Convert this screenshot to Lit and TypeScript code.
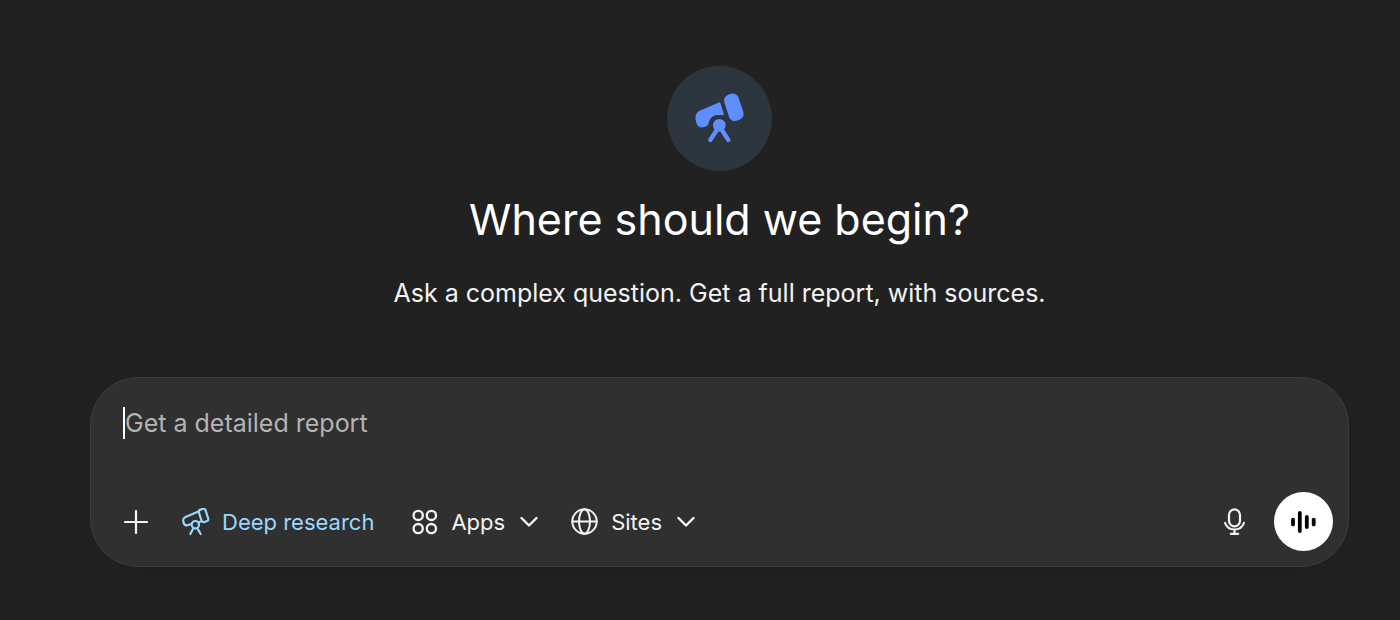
import { LitElement, html, css, svg } from "lit";
import { customElement, state } from "lit/decorators.js";

const chevron = html`<svg class="chevron" width="20" height="12" viewBox="-2 0 20 12" aria-hidden="true">
  <path d="M1.5 2 9 9.5 16.5 2" />
</svg>`;

const bars = [
  { x: 2, half: 2.4 },
  { x: 8.8, half: 9 },
  { x: 15.8, half: 5 },
  { x: 22.7, half: 2.4 },
];

@customElement("app-root")
export class AppRoot extends LitElement {
  static styles = css`
    :host {
      display: block;
      min-height: 100vh;
      box-sizing: border-box;
      padding: 66px 51px 52px 90px;
      background: #212121;
      color: #fff;
      font-family: Inter, "Liberation Sans", sans-serif;
    }
    svg {
      display: block;
      flex: none;
      fill: none;
      stroke: currentColor;
      stroke-linecap: round;
      stroke-linejoin: round;
    }
    .hero {
      display: flex;
      flex-direction: column;
      align-items: center;
      text-align: center;
    }
    .badge {
      display: grid;
      place-items: center;
      width: 105px;
      height: 105px;
      border-radius: 50%;
      background: #2d353e;
      color: #5f8fff;
    }
    h1 {
      margin: 20px 0 0;
      font-size: 43px;
      line-height: 56px;
      font-weight: 400;
    }
    .lead {
      margin: 28px 0 0;
      font-size: 25px;
      line-height: 36px;
      color: #f3f3f3;
    }
    .composer {
      display: flex;
      flex-direction: column;
      justify-content: space-between;
      gap: 52px;
      box-sizing: border-box;
      margin-top: 66px;
      padding: 28px 15px 15px 32px;
      border: 1px solid #3d3d3d;
      border-radius: 48px;
      background: #303030;
      box-shadow: 0 8px 36px rgba(0, 0, 0, 0.06);
    }
    .prompt {
      display: flex;
      align-items: center;
    }
    .caret {
      width: 2px;
      height: 32px;
      background: #fff;
    }
    input {
      flex: 1;
      min-width: 0;
      height: 34px;
      padding: 0;
      border: 0;
      outline: 0;
      background: none;
      color: #fff;
      font: inherit;
      font-size: 25px;
      caret-color: transparent;
    }
    input::placeholder {
      color: #b4b4b4;
      opacity: 1;
    }
    .toolbar {
      display: flex;
      align-items: center;
    }
    button {
      display: flex;
      align-items: center;
      padding: 0;
      border: 0;
      background: none;
      color: #f3f3f3;
      font: inherit;
      font-size: 22px;
      line-height: 32px;
      cursor: pointer;
    }
    .tools {
      display: flex;
      align-items: center;
      gap: 33px;
      flex: 1;
    }
    .research {
      gap: 12px;
      padding-right: 5px;
      color: #99d8ff;
    }
    .menu {
      gap: 13px;
    }
    .chevron {
      stroke-width: 2.4;
    }
    .voice {
      justify-content: center;
      width: 59px;
      height: 59px;
      margin-left: 28px;
      border-radius: 50%;
      background: #fff;
      color: #000;
    }
  `;

  @state() private value = "";

  render() {
    return html`
      <header class="hero">
        <div class="badge">
          <svg width="60" height="60" viewBox="88 86 180 180" aria-hidden="true">
            <g fill="currentColor" stroke="none">
              <path d="M173 127Q178 124 180 130L189 160Q190 166 184 165Q151 158 144 188Q143 195 137 198L131 200Q114 204 108 190L105 180Q101 162 115 152Z" />
              <rect x="197" y="100" width="45" height="82" rx="18" transform="rotate(-18 219 141)" />
              <circle cx="176" cy="195" r="19" />
            </g>
            <path d="M171 205 149 239M181 205 203 239" stroke-width="13" />
          </svg>
        </div>
        <h1>Where should we begin?</h1>
        <p class="lead">Ask a complex question. Get a full report, with sources.</p>
      </header>
      <form class="composer" @submit=${(e: Event) => e.preventDefault()}>
        <div class="prompt">
          ${this.value ? null : html`<span class="caret"></span>`}
          <input
            aria-label="Message"
            placeholder="Get a detailed report"
            .value=${this.value}
            @input=${(e: Event) => (this.value = (e.target as HTMLInputElement).value)}
          />
        </div>
        <div class="toolbar">
          <div class="tools">
            <button type="button" aria-label="Add">
              <svg width="26" height="26" viewBox="-1 -1 26 26" stroke-width="2.2">
                <path d="M12 1v22M1 12h22" />
              </svg>
            </button>
            <button type="button" class="research">
              <svg width="28" height="28" viewBox="215 54 84 84" stroke-width="6.5" aria-hidden="true">
                <path d="M266 64 224 82Q217 86 219 94L220 99Q223 107 231 106L243 102M267 96 274 94" />
                <rect x="269" y="57" width="21" height="39" rx="7" transform="rotate(-18 279 76)" />
                <circle cx="255" cy="104" r="11" />
                <path d="M249 115 240 132M261 115 271 132" />
              </svg>
              Deep research
            </button>
            <button type="button" class="menu">
              <svg width="26" height="26" viewBox="0 0 26 26" stroke-width="2.3" aria-hidden="true">
                <circle cx="6.2" cy="6.4" r="4.6" />
                <circle cx="19.4" cy="6.4" r="4.6" />
                <circle cx="6.2" cy="19.6" r="4.6" />
                <circle cx="19.4" cy="19.6" r="4.6" />
              </svg>
              Apps ${chevron}
            </button>
            <button type="button" class="menu">
              <svg width="27" height="27" viewBox="0 0 27 27" stroke-width="2" aria-hidden="true">
                <circle cx="13.5" cy="13.5" r="12.2" />
                <ellipse cx="13.5" cy="13.5" rx="5.5" ry="12.2" />
                <path d="M1.3 13.5h24.4" />
              </svg>
              Sites ${chevron}
            </button>
          </div>
          <button type="button" aria-label="Dictate">
            <svg width="22" height="28" viewBox="0.5 0.5 22 28" stroke-width="2.2">
              <rect x="5.5" y="1.8" width="11" height="17" rx="5.5" />
              <path d="M1.6 15.5C3 19.6 6.5 22 11 22s8-2.4 9.4-6.5M11 22v4.3M7.3 26.3h7.4" />
            </svg>
          </button>
          <button type="button" class="voice" aria-label="Voice mode">
            <svg width="26" height="24" viewBox="0 0 26 24" stroke-width="3.8">
              ${bars.map((b) => svg`<path d="M${b.x} ${12 - b.half}V${12 + b.half}" />`)}
            </svg>
          </button>
        </div>
      </form>
    `;
  }
}
